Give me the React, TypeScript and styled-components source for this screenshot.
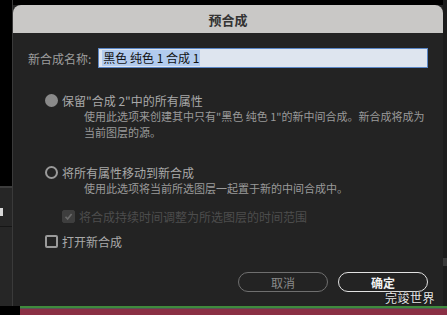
import React from 'react'
import styled, { createGlobalStyle } from 'styled-components'

const GlobalStyle = createGlobalStyle`
  html, body {
    margin: 0;
    padding: 0;
    background: #000;
  }
  body {
    font-family: "Noto Sans CJK SC", "Noto Sans", sans-serif;
  }
`

const Page = styled.div`
  width: 447px;
  height: 315px;
  overflow: hidden;
  background: #000;
  display: flex;
  flex-direction: column;
  position: relative;
`

const Main = styled.div`
  display: flex;
  height: 306px;
`

const LeftStrip = styled.div`
  width: 13px;
  display: flex;
  flex-direction: column;
  border-right: 1px solid #3a3a3a;
  box-sizing: border-box;
`

const StripBlack = styled.div`
  height: 186px;
  background: #000;
  border-bottom: 2px solid #3c3c3c;
`

const StripPanel = styled.div`
  flex: 1;
  background: #262626;
  padding-top: 20px;
`

const StripTab = styled.div`
  width: 3px;
  height: 8px;
  background: #d8d8d8;
  margin-bottom: 10px;
`

const StripRule = styled.div`
  height: 1px;
  background: #161616;
`

const RightStrip = styled.div`
  width: 4px;
  background: #1c1c1c;
  display: flex;
  flex-direction: column;
  justify-content: flex-end;
  padding-bottom: 40px;
  box-sizing: border-box;
`

const RightMark = styled.div`
  height: 8px;
  background: #3a3a3a;
`

const Dialog = styled.div`
  width: 430px;
  margin-top: 5px;
  display: flex;
  flex-direction: column;
  background: #232323;
`

const TitleBar = styled.div`
  height: 28px;
  background: #c9c8c6;
  border-radius: 8px 8px 0 0;
  display: flex;
  align-items: center;
  justify-content: center;
  font-size: 13px;
  font-weight: bold;
  color: #333;
`

const Body = styled.div`
  flex: 1;
  padding: 15px 15px 0 15px;
  display: flex;
  flex-direction: column;
`

const NameRow = styled.div`
  display: flex;
  align-items: center;
  gap: 7px;
`

const Label = styled.span`
  font-size: 12px;
  color: #9d9d9d;
  white-space: nowrap;
`

const NameInput = styled.div`
  flex: 1;
  height: 20px;
  box-sizing: border-box;
  background: #dee5ef;
  border: 1px solid #5a86c6;
  display: flex;
  align-items: center;
  padding-left: 3px;
`

const Selected = styled.span`
  background: #b2cbee;
  color: #111;
  font-size: 12px;
  line-height: 16px;
  padding: 0 1px;
`

const Option = styled.div<{ $top: number; $indent: number; $disabled?: boolean }>`
  margin-top: ${(p) => p.$top}px;
  padding-left: ${(p) => p.$indent}px;
  display: flex;
  align-items: center;
  gap: 4px;
  height: 16px;
  font-size: 12px;
  color: ${(p) => (p.$disabled ? '#4d4d4d' : '#a9a9a9')};
  white-space: nowrap;
`

const RadioDot = styled.span<{ $on?: boolean }>`
  width: 13px;
  height: 13px;
  box-sizing: border-box;
  border-radius: 50%;
  background: ${(p) => (p.$on ? '#8a8a8a' : 'transparent')};
  border: 2px solid ${(p) => (p.$on ? '#8a8a8a' : '#9a9a9a')};
  flex-shrink: 0;
`

const Check = styled.span<{ $disabled?: boolean }>`
  width: 13px;
  height: 13px;
  box-sizing: border-box;
  border-radius: 2px;
  flex-shrink: 0;
  display: flex;
  align-items: center;
  justify-content: center;
  background: ${(p) => (p.$disabled ? '#3e3e3e' : 'transparent')};
  border: ${(p) => (p.$disabled ? '1px solid #3e3e3e' : '2px solid #9a9a9a')};
`

const Desc = styled.div`
  padding-left: 56px;
  font-size: 11px;
  line-height: 16px;
  color: #9a9a9a;
  white-space: nowrap;
`

const Buttons = styled.div`
  margin-top: 23px;
  display: flex;
  justify-content: flex-end;
  gap: 10px;
`

const Button = styled.div<{ $primary?: boolean }>`
  width: 90px;
  height: 20px;
  box-sizing: border-box;
  border-radius: 10px;
  border: 1.5px solid ${(p) => (p.$primary ? '#e2e2e2' : '#6f6f6f')};
  color: ${(p) => (p.$primary ? '#f2f2f2' : '#8a8a8a')};
  font-weight: ${(p) => (p.$primary ? 'bold' : 'normal')};
  font-size: 12px;
  display: flex;
  align-items: center;
  justify-content: center;
`

const Bands = styled.div`
  flex: 1;
  margin-left: 20px;
  display: flex;
  flex-direction: column;
`

const GreenBand = styled.div`
  height: 2px;
  background: #3f8a3c;
  border-bottom: 1px solid #555;
`

const RedBand = styled.div`
  flex: 1;
  background: #8a2f44;
`

const Watermark = styled.div`
  position: absolute;
  right: 12px;
  top: 289px;
  font-size: 12px;
  color: #e8e8e8;
  letter-spacing: 0.5px;
  text-shadow: 0 0 2px #000;
`

export default function App() {
  return (
    <>
      <GlobalStyle />
      <Page>
        <Main>
          <LeftStrip>
            <StripBlack />
            <StripPanel>
              <StripTab />
              <StripRule />
            </StripPanel>
          </LeftStrip>
          <Dialog>
            <TitleBar>预合成</TitleBar>
            <Body>
              <NameRow>
                <Label>新合成名称:</Label>
                <NameInput>
                  <Selected>黑色 纯色 1 合成 1</Selected>
                </NameInput>
              </NameRow>

              <Option $top={24} $indent={17}>
                <RadioDot $on />
                保留"合成 2"中的所有属性
              </Option>
              <Desc>
                使用此选项来创建其中只有"黑色 纯色 1"的新中间合成。新合成将成为
                <br />
                当前图层的源。
              </Desc>

              <Option $top={24} $indent={17}>
                <RadioDot />
                将所有属性移动到新合成
              </Option>
              <Desc>使用此选项将当前所选图层一起置于新的中间合成中。</Desc>

              <Option $top={12} $indent={34} $disabled>
                <Check $disabled>
                  <svg width="9" height="9" viewBox="0 0 9 9">
                    <path d="M1.5 4.8 L3.6 7 L7.6 2" fill="none" stroke="#6a6a6a" strokeWidth="1.6" />
                  </svg>
                </Check>
                将合成持续时间调整为所选图层的时间范围
              </Option>
              <Option $top={9} $indent={17}>
                <Check />
                打开新合成
              </Option>

              <Buttons>
                <Button>取消</Button>
                <Button $primary>确定</Button>
              </Buttons>
            </Body>
          </Dialog>
          <RightStrip>
            <RightMark />
          </RightStrip>
        </Main>
        <Bands>
          <GreenBand />
          <RedBand />
        </Bands>
        <Watermark>完竣世界</Watermark>
      </Page>
    </>
  )
}
